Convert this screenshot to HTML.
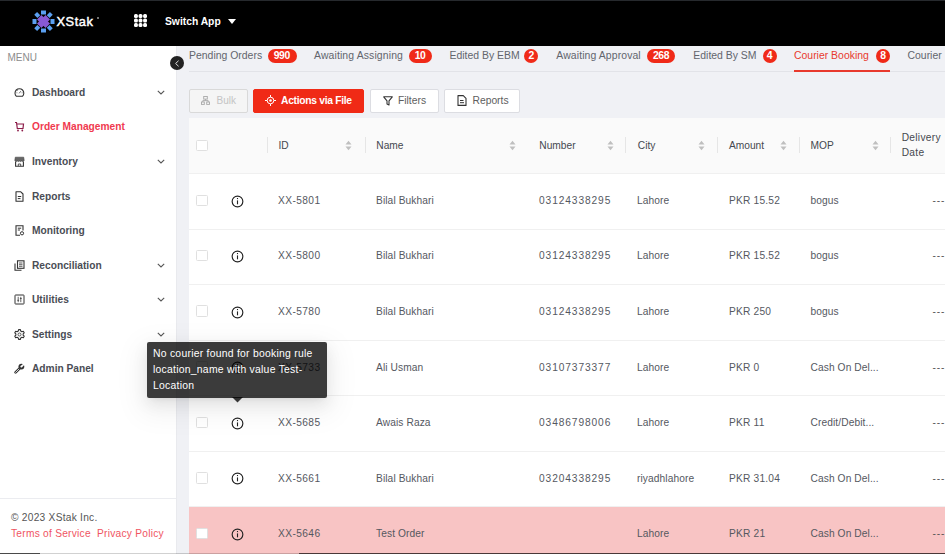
<!DOCTYPE html>
<html><head><meta charset="utf-8">
<style>
*{box-sizing:border-box;margin:0;padding:0}
html,body{width:945px;height:554px;overflow:hidden;background:#fff;font-family:"Liberation Sans",sans-serif;position:relative}
div,svg{position:absolute}
span{position:static}
#hdr{left:0;top:0;width:945px;height:46px;background:#000;border-top:1px solid #26292d}
#side{left:0;top:46px;width:176px;height:508px;background:#fff}
#main{left:176px;top:46px;width:769px;height:508px;background:#f0f1f5;border-left:1px solid #e9eaee}
.logo-t{left:56.5px;top:14px;font-size:12.8px;color:#fff;font-weight:normal;letter-spacing:0.55px;-webkit-text-stroke:0.45px #fff}
.sw{left:165px;top:16px;font-size:10.3px;color:#fff;font-weight:bold}
.menu{left:7.5px;top:51.5px;font-size:10px;color:#8c8c8c}
.mi{left:32px;font-size:10.2px;margin-top:0.9px;font-weight:bold;color:#4a4d55;white-space:nowrap}
.mi.act{color:#f03a4f}
.chev{left:157px}
.ico{left:14px}
.foot1{left:11px;top:511.5px;font-size:10.2px;color:#555;letter-spacing:0.25px}
.foot2{left:11px;top:527.5px;font-size:10.2px;letter-spacing:0.25px;color:#f05462;white-space:nowrap}
.tab{top:49.7px;font-size:10.45px;color:#62656d;white-space:nowrap}
.tab.act{color:#e8392d}
.badge{height:14px;top:48.7px;background:#f02a18;color:#fff;border-radius:7px;font-size:10.4px;line-height:13.5px;letter-spacing:-0.4px;text-indent:-0.4px;text-align:center;font-weight:bold}
.tabline{left:189px;top:71px;width:756px;height:1px;background:#e2e3e8}
.uline{left:794px;top:69.8px;width:96px;height:2px;background:#e8392d}
.btn{top:89px;height:23.6px;border:1px solid #dcdde2;border-radius:2px;background:#fff;white-space:nowrap}
.bt{font-size:10.3px;color:#5e5e5e;top:5px}
.th{left:189px;top:118px;width:756px;height:56px;background:#fafafa;border-bottom:1px solid #f0f0f0}
.ht{font-size:10.2px;color:#45484f;white-space:nowrap;top:140px}
.sep{top:137px;width:1px;height:16px;background:#e6e6e6}
.sort{top:140px}
.row{left:189px;width:756px;background:#fff;border-bottom:1px solid #f0f0f0}
.row.pink{background:#f8c4c4;border-bottom:0}
.td{font-size:10.2px;color:#55585f;white-space:nowrap}
.dash{left:932.5px;color:#555;letter-spacing:0.8px}
.cb{left:196px;width:11.5px;height:11.5px;border:1px solid #e0e0e0;background:#fff;border-radius:1.5px}
.info{left:231px}
.tip{left:147px;top:342px;width:180px;height:55.5px;background:rgba(0,0,0,0.77);border-radius:2px;color:#fff;font-size:10.4px;line-height:15.8px;padding:4px 6px;letter-spacing:0.25px;box-shadow:0 3px 6px -4px rgba(0,0,0,.12),0 6px 16px 0 rgba(0,0,0,.08),0 9px 28px 8px rgba(0,0,0,.05)}

</style></head><body>
<div id="hdr"></div>
<svg style="left:32px;top:10px" width="23" height="23" viewBox="0 0 23 23">
 <g fill="#5b9ff0">
  <rect x="9" y="0.5" width="5" height="4"/>
  <rect x="9" y="18.5" width="5" height="4"/>
  <rect x="0.5" y="9" width="4" height="5"/>
  <rect x="18.5" y="9" width="4" height="5"/>
  <rect x="3" y="3" width="4.5" height="4" transform="rotate(45 5.25 5)"/>
  <rect x="15.5" y="3" width="4.5" height="4" transform="rotate(-45 17.75 5)"/>
  <rect x="3" y="16" width="4.5" height="4" transform="rotate(-45 5.25 18)"/>
  <rect x="15.5" y="16" width="4.5" height="4" transform="rotate(45 17.75 18)"/>
 </g>
 <g stroke="#8859d4" stroke-width="6.2">
  <line x1="7.2" y1="7.2" x2="15.8" y2="15.8"/><line x1="15.8" y1="7.2" x2="7.2" y2="15.8"/>
 </g>
</svg>
<div class="logo-t">XStak</div>
<div style="left:96.5px;top:16.5px;width:2px;height:2px;border-radius:1px;background:#999"></div>
<svg style="left:134px;top:14px" width="13" height="13" viewBox="0 0 13 13"><g fill="#fff">
<rect x="0" y="0" width="3.9" height="3.9" rx="1.5"/><rect x="4.55" y="0" width="3.9" height="3.9" rx="1.5"/><rect x="9.1" y="0" width="3.9" height="3.9" rx="1.5"/>
<rect x="0" y="4.55" width="3.9" height="3.9" rx="1.5"/><rect x="4.55" y="4.55" width="3.9" height="3.9" rx="1.5"/><rect x="9.1" y="4.55" width="3.9" height="3.9" rx="1.5"/>
<rect x="0" y="9.1" width="3.9" height="3.9" rx="1.5"/><rect x="4.55" y="9.1" width="3.9" height="3.9" rx="1.5"/><rect x="9.1" y="9.1" width="3.9" height="3.9" rx="1.5"/>
</g></svg>
<div class="sw">Switch App</div>
<svg style="left:227.5px;top:19px" width="8" height="5" viewBox="0 0 8 5"><path d="M0 0H8L4 5Z" fill="#fff"/></svg>

<div id="side"></div>
<div class="menu">MENU</div>
<!-- menu items -->
<svg class="ico" style="top:87px" width="11" height="11" viewBox="0 0 11 11"><path d="M2.4 9.3A4.4 4.4 0 1 1 8.4 9.3Z" fill="none" stroke="#333" stroke-width="1.1" stroke-linejoin="round"/><path d="M5.2 6.3L6.8 4.2M2.5 5.8H3.3M3.3 3.3L3.9 3.9M7.7 5.8H8.5" stroke="#444" stroke-width="0.8"/></svg>
<div class="mi" style="top:86px">Dashboard</div>
<svg class="chev" style="top:89.5px" width="8" height="5" viewBox="0 0 8 5"><path d="M0.8 0.8L4 4L7.2 0.8" fill="none" stroke="#555" stroke-width="1.1"/></svg>

<svg class="ico" style="top:121px" width="11" height="11" viewBox="0 0 11 11"><path d="M1 1.5H2.5L3.3 7.5H9L9.5 3H2.8" fill="none" stroke="#8d1d4a" stroke-width="1.2"/><circle cx="4" cy="9.5" r="0.9" fill="#8d1d4a"/><circle cx="8.3" cy="9.5" r="0.9" fill="#8d1d4a"/></svg>
<div class="mi act" style="top:120.5px">Order Management</div>

<svg class="ico" style="top:155.5px" width="11" height="11" viewBox="0 0 11 11"><path d="M1.3 1.2H9.7L10.2 4.6Q9 6.2 7.7 4.9Q6.5 6.2 5.5 4.9Q4.5 6.2 3.3 4.9Q2 6.2 0.8 4.6Z" fill="#666" stroke="#444" stroke-width="0.6"/><path d="M1.6 5.6V10.2H9.4V5.6" fill="none" stroke="#333" stroke-width="1.1"/><path d="M4.3 10V8H6.7V10" fill="none" stroke="#444" stroke-width="0.9"/></svg>
<div class="mi" style="top:155px">Inventory</div>
<svg class="chev" style="top:158.5px" width="8" height="5" viewBox="0 0 8 5"><path d="M0.8 0.8L4 4L7.2 0.8" fill="none" stroke="#555" stroke-width="1.1"/></svg>

<svg class="ico" style="top:190.5px" width="11" height="11" viewBox="0 0 11 11"><path d="M2 0.8H6.8L9 3V10.2H2Z" fill="none" stroke="#333" stroke-width="1.1" stroke-linejoin="round"/><path d="M3.8 5.5H7.2M3.8 7.6H6.5" stroke="#333" stroke-width="1"/></svg>
<div class="mi" style="top:190px">Reports</div>

<svg class="ico" style="top:225px" width="11" height="11" viewBox="0 0 11 11"><path d="M6 10.2H2V0.8H9V5.5" fill="none" stroke="#333" stroke-width="1.1"/><path d="M3.8 3.2H7.2M3.8 5H6" stroke="#333" stroke-width="1"/><circle cx="8" cy="8.3" r="1.6" fill="none" stroke="#333" stroke-width="1"/></svg>
<div class="mi" style="top:224px">Monitoring</div>

<svg class="ico" style="top:259.5px" width="11" height="11" viewBox="0 0 11 11"><rect x="3.5" y="0.8" width="6.5" height="7.5" fill="none" stroke="#333" stroke-width="1.1"/><path d="M1 3.5V10.2H7.5" fill="none" stroke="#333" stroke-width="1.1"/><path d="M5 3H8.5M5 4.7H8.5M5 6.3H8.5" stroke="#333" stroke-width="0.8"/></svg>
<div class="mi" style="top:259px">Reconciliation</div>
<svg class="chev" style="top:262.5px" width="8" height="5" viewBox="0 0 8 5"><path d="M0.8 0.8L4 4L7.2 0.8" fill="none" stroke="#555" stroke-width="1.1"/></svg>

<svg class="ico" style="top:294px" width="11" height="11" viewBox="0 0 11 11"><rect x="1" y="1" width="9" height="9" rx="0.5" fill="none" stroke="#333" stroke-width="1"/><path d="M4.2 2.8V8.2M6.8 2.8V8.2M3.3 6.3H5.1M5.9 4.5H7.7" stroke="#333" stroke-width="0.75"/></svg>
<div class="mi" style="top:293px">Utilities</div>
<svg class="chev" style="top:296.5px" width="8" height="5" viewBox="0 0 8 5"><path d="M0.8 0.8L4 4L7.2 0.8" fill="none" stroke="#555" stroke-width="1.1"/></svg>

<svg class="ico" style="top:328.5px" width="11" height="11" viewBox="0 0 11 11"><path d="M4.61 0.58L6.39 0.58L6.75 2.02L7.89 2.67L9.32 2.27L10.20 3.81L9.14 4.84L9.14 6.16L10.20 7.19L9.32 8.73L7.89 8.33L6.75 8.98L6.39 10.42L4.61 10.42L4.25 8.98L3.11 8.33L1.68 8.73L0.80 7.19L1.86 6.16L1.86 4.84L0.80 3.81L1.68 2.27L3.11 2.67L4.25 2.02Z" fill="none" stroke="#333" stroke-width="1.1" stroke-linejoin="round"/><circle cx="5.5" cy="5.5" r="1.5" fill="none" stroke="#444" stroke-width="0.9"/></svg>
<div class="mi" style="top:328px">Settings</div>
<svg class="chev" style="top:331.5px" width="8" height="5" viewBox="0 0 8 5"><path d="M0.8 0.8L4 4L7.2 0.8" fill="none" stroke="#555" stroke-width="1.1"/></svg>

<svg class="ico" style="top:363px" width="11" height="11" viewBox="0 0 11 11"><path d="M1.6 9.4L5.6 5.4" stroke="#333" stroke-width="2.6" stroke-linecap="round"/><path d="M1.6 9.4L5.6 5.4" stroke="#fff" stroke-width="0.8" stroke-linecap="round"/><circle cx="7.4" cy="3.6" r="2.9" fill="#333"/><path d="M7.2 3.8L10.6 0.4" stroke="#fff" stroke-width="1.6"/><circle cx="7.4" cy="3.6" r="1" fill="#fff"/></svg>
<div class="mi" style="top:362px">Admin Panel</div>

<div style="left:0;top:498px;width:176px;height:1px;background:#ebecf0"></div>
<div class="foot1">© 2023 XStak Inc.</div>
<div class="foot2">Terms of Service&nbsp; Privacy Policy</div>


<div id="main"></div>
<!-- collapse button -->
<div style="left:170px;top:56px;width:14px;height:14px;border-radius:7px;background:#222"></div>
<svg style="left:174px;top:59.5px" width="6" height="7" viewBox="0 0 6 7"><path d="M4.6 0.7L1.6 3.5L4.6 6.3" fill="none" stroke="#eee" stroke-width="0.9"/></svg>

<!-- tabs -->
<div class="tab" style="left:189px">Pending Orders</div>
<div class="badge" style="left:267.5px;width:29px">990</div>
<div class="tab" style="left:314px;letter-spacing:0.12px">Awaiting Assigning</div>
<div class="badge" style="left:409px;width:22.5px">10</div>
<div class="tab" style="left:449.5px">Edited By EBM</div>
<div class="badge" style="left:524.3px;width:14px">2</div>
<div class="tab" style="left:556.3px;letter-spacing:0.1px">Awaiting Approval</div>
<div class="badge" style="left:647.4px;width:27.5px">268</div>
<div class="tab" style="left:693.3px">Edited By SM</div>
<div class="badge" style="left:762.6px;width:14px">4</div>
<div class="tab act" style="left:794px">Courier Booking</div>
<div class="badge" style="left:876.2px;width:14px">8</div>
<div class="tab" style="left:907.5px">Courier</div>
<div class="tabline"></div>
<div class="uline"></div>

<!-- buttons -->
<div class="btn" style="left:189px;width:59px;background:#f5f5f5;border-color:#d9d9d9">
 <svg style="left:11px;top:5.5px" width="9" height="9" viewBox="0 0 9 9"><g fill="none" stroke="#a8a8a8" stroke-width="0.9"><rect x="2.7" y="0.5" width="3.6" height="2.6"/><path d="M4.5 3.1V4.6M1.8 4.6H7.2M1.8 4.6V6M7.2 4.6V6"/><rect x="0.5" y="6" width="2.8" height="2.4"/><rect x="5.7" y="6" width="2.8" height="2.4"/></g></svg>
 <div class="bt" style="left:26.5px;top:4.6px;color:#c4c4c4;font-size:10px">Bulk</div>
</div>
<div class="btn" style="left:253px;width:110.5px;background:#f02a16;border-color:#f02a16">
 <svg style="left:11px;top:4.5px" width="11" height="11" viewBox="0 0 11 11"><g fill="none" stroke="#fff" stroke-width="1"><circle cx="5.5" cy="5.5" r="3.3"/><path d="M5.5 0V2.1M5.5 8.9V11M0 5.5H2.1M8.9 5.5H11"/></g><circle cx="5.5" cy="5.5" r="1.3" fill="#fff"/></svg>
 <div class="bt" style="left:27px;color:#fff;font-weight:bold;letter-spacing:-0.3px">Actions via File</div>
</div>
<div class="btn" style="left:370px;width:68.5px">
 <svg style="left:11.5px;top:5.5px" width="10" height="10" viewBox="0 0 10 10"><path d="M0.7 0.8H9.3L6 4.8V9L4 8V4.8Z" fill="none" stroke="#333" stroke-width="1.1" stroke-linejoin="round"/></svg>
 <div class="bt" style="left:27px">Filters</div>
</div>
<div class="btn" style="left:444px;width:76px">
 <svg style="left:11.5px;top:5px" width="10" height="11" viewBox="0 0 10 11"><path d="M1 0.6H6.3L9 3.3V10.4H1Z" fill="none" stroke="#333" stroke-width="1.1" stroke-linejoin="round"/><path d="M3 5.5H6.5M3 7.7H7" stroke="#333" stroke-width="1"/></svg>
 <div class="bt" style="left:27.5px">Reports</div>
</div>

<!-- table header -->
<div class="th"></div>
<div class="cb" style="top:139.5px"></div>
<div class="sep" style="left:266.5px"></div>
<div class="ht" style="left:278.4px">ID</div>
<div class="sep" style="left:364.5px"></div>
<div class="ht" style="left:376.3px">Name</div>
<div class="ht" style="left:539.3px">Number</div>
<div class="sep" style="left:625.3px"></div>
<div class="ht" style="left:637.8px">City</div>
<div class="sep" style="left:717px"></div>
<div class="ht" style="left:729px">Amount</div>
<div class="sep" style="left:798.8px"></div>
<div class="ht" style="left:810.5px">MOP</div>
<div class="sep" style="left:889.6px"></div>
<div class="ht" style="left:901.7px;top:130px;line-height:15.2px;letter-spacing:0.3px">Delivery<br>Date</div>
<svg class="sort" style="left:345.4px" width="7" height="11" viewBox="0 0 7 11"><path d="M0.5 4.5L3.5 0.8L6.5 4.5Z M0.5 6.5L3.5 10.2L6.5 6.5Z" fill="#bfbfbf"/></svg>
<svg class="sort" style="left:509.1px" width="7" height="11" viewBox="0 0 7 11"><path d="M0.5 4.5L3.5 0.8L6.5 4.5Z M0.5 6.5L3.5 10.2L6.5 6.5Z" fill="#bfbfbf"/></svg>
<svg class="sort" style="left:606.9px" width="7" height="11" viewBox="0 0 7 11"><path d="M0.5 4.5L3.5 0.8L6.5 4.5Z M0.5 6.5L3.5 10.2L6.5 6.5Z" fill="#bfbfbf"/></svg>
<svg class="sort" style="left:697.5px" width="7" height="11" viewBox="0 0 7 11"><path d="M0.5 4.5L3.5 0.8L6.5 4.5Z M0.5 6.5L3.5 10.2L6.5 6.5Z" fill="#bfbfbf"/></svg>
<svg class="sort" style="left:779.5px" width="7" height="11" viewBox="0 0 7 11"><path d="M0.5 4.5L3.5 0.8L6.5 4.5Z M0.5 6.5L3.5 10.2L6.5 6.5Z" fill="#bfbfbf"/></svg>
<svg class="sort" style="left:871.7px" width="7" height="11" viewBox="0 0 7 11"><path d="M0.5 4.5L3.5 0.8L6.5 4.5Z M0.5 6.5L3.5 10.2L6.5 6.5Z" fill="#bfbfbf"/></svg>

<div class="row" style="top:174px;height:56px"></div>
<div class="cb" style="top:194.6px"></div>
<svg class="info" style="top:194.7px" width="13" height="13" viewBox="0 0 13 13"><circle cx="6.5" cy="6.5" r="5.35" fill="none" stroke="#222" stroke-width="1.15"/><rect x="5.95" y="5.4" width="1.1" height="3.9" fill="#222"/><rect x="5.95" y="3.0" width="1.1" height="1.1" fill="#222"/></svg>
<div class="td" style="left:278px;top:195.3px;letter-spacing:0.4px">XX-5801</div>
<div class="td" style="left:376px;top:195.3px;letter-spacing:0.1px">Bilal Bukhari</div>
<div class="td" style="left:539px;top:195.3px;letter-spacing:0.9px">03124338295</div>
<div class="td" style="left:637px;top:195.3px;letter-spacing:0.1px">Lahore</div>
<div class="td" style="left:729px;top:195.3px;letter-spacing:0.2px">PKR 15.52</div>
<div class="td" style="left:810.5px;top:195.3px;letter-spacing:0.1px">bogus</div>
<div class="td dash" style="top:195.3px">---</div>
<div class="row" style="top:230px;height:55px"></div>
<div class="cb" style="top:249.8px"></div>
<svg class="info" style="top:249.8px" width="13" height="13" viewBox="0 0 13 13"><circle cx="6.5" cy="6.5" r="5.35" fill="none" stroke="#222" stroke-width="1.15"/><rect x="5.95" y="5.4" width="1.1" height="3.9" fill="#222"/><rect x="5.95" y="3.0" width="1.1" height="1.1" fill="#222"/></svg>
<div class="td" style="left:278px;top:250.4px;letter-spacing:0.4px">XX-5800</div>
<div class="td" style="left:376px;top:250.4px;letter-spacing:0.1px">Bilal Bukhari</div>
<div class="td" style="left:539px;top:250.4px;letter-spacing:0.9px">03124338295</div>
<div class="td" style="left:637px;top:250.4px;letter-spacing:0.1px">Lahore</div>
<div class="td" style="left:729px;top:250.4px;letter-spacing:0.2px">PKR 15.52</div>
<div class="td" style="left:810.5px;top:250.4px;letter-spacing:0.1px">bogus</div>
<div class="td dash" style="top:250.4px">---</div>
<div class="row" style="top:285px;height:56px"></div>
<div class="cb" style="top:305.4px"></div>
<svg class="info" style="top:305.5px" width="13" height="13" viewBox="0 0 13 13"><circle cx="6.5" cy="6.5" r="5.35" fill="none" stroke="#222" stroke-width="1.15"/><rect x="5.95" y="5.4" width="1.1" height="3.9" fill="#222"/><rect x="5.95" y="3.0" width="1.1" height="1.1" fill="#222"/></svg>
<div class="td" style="left:278px;top:306.1px;letter-spacing:0.4px">XX-5780</div>
<div class="td" style="left:376px;top:306.1px;letter-spacing:0.1px">Bilal Bukhari</div>
<div class="td" style="left:539px;top:306.1px;letter-spacing:0.9px">03124338295</div>
<div class="td" style="left:637px;top:306.1px;letter-spacing:0.1px">Lahore</div>
<div class="td" style="left:729px;top:306.1px;letter-spacing:0.2px">PKR 250</div>
<div class="td" style="left:810.5px;top:306.1px;letter-spacing:0.1px">bogus</div>
<div class="td dash" style="top:306.1px">---</div>
<div class="row" style="top:341px;height:55px"></div>
<div class="cb" style="top:361.0px"></div>
<svg class="info" style="top:361.1px" width="13" height="13" viewBox="0 0 13 13"><circle cx="6.5" cy="6.5" r="5.35" fill="none" stroke="#222" stroke-width="1.15"/><rect x="5.95" y="5.4" width="1.1" height="3.9" fill="#222"/><rect x="5.95" y="3.0" width="1.1" height="1.1" fill="#222"/></svg>
<div class="td" style="left:278px;top:361.7px;letter-spacing:0.4px">XX-5733</div>
<div class="td" style="left:376px;top:361.7px;letter-spacing:0.1px">Ali Usman</div>
<div class="td" style="left:539px;top:361.7px;letter-spacing:0.9px">03107373377</div>
<div class="td" style="left:637px;top:361.7px;letter-spacing:0.1px">Lahore</div>
<div class="td" style="left:729px;top:361.7px;letter-spacing:0.2px">PKR 0</div>
<div class="td" style="left:810.5px;top:361.7px;letter-spacing:0.1px">Cash On Del...</div>
<div class="td dash" style="top:361.7px">---</div>
<div class="row" style="top:396px;height:56px"></div>
<div class="cb" style="top:416.6px"></div>
<svg class="info" style="top:416.7px" width="13" height="13" viewBox="0 0 13 13"><circle cx="6.5" cy="6.5" r="5.35" fill="none" stroke="#222" stroke-width="1.15"/><rect x="5.95" y="5.4" width="1.1" height="3.9" fill="#222"/><rect x="5.95" y="3.0" width="1.1" height="1.1" fill="#222"/></svg>
<div class="td" style="left:278px;top:417.3px;letter-spacing:0.4px">XX-5685</div>
<div class="td" style="left:376px;top:417.3px;letter-spacing:0.1px">Awais Raza</div>
<div class="td" style="left:539px;top:417.3px;letter-spacing:0.9px">03486798006</div>
<div class="td" style="left:637px;top:417.3px;letter-spacing:0.1px">Lahore</div>
<div class="td" style="left:729px;top:417.3px;letter-spacing:0.2px">PKR 11</div>
<div class="td" style="left:810.5px;top:417.3px;letter-spacing:0.1px">Credit/Debit...</div>
<div class="td dash" style="top:417.3px">---</div>
<div class="row" style="top:452px;height:55px"></div>
<div class="cb" style="top:472.4px"></div>
<svg class="info" style="top:472.4px" width="13" height="13" viewBox="0 0 13 13"><circle cx="6.5" cy="6.5" r="5.35" fill="none" stroke="#222" stroke-width="1.15"/><rect x="5.95" y="5.4" width="1.1" height="3.9" fill="#222"/><rect x="5.95" y="3.0" width="1.1" height="1.1" fill="#222"/></svg>
<div class="td" style="left:278px;top:473.1px;letter-spacing:0.4px">XX-5661</div>
<div class="td" style="left:376px;top:473.1px;letter-spacing:0.1px">Bilal Bukhari</div>
<div class="td" style="left:539px;top:473.1px;letter-spacing:0.9px">03204338295</div>
<div class="td" style="left:637px;top:473.1px;letter-spacing:0.1px">riyadhlahore</div>
<div class="td" style="left:729px;top:473.1px;letter-spacing:0.2px">PKR 31.04</div>
<div class="td" style="left:810.5px;top:473.1px;letter-spacing:0.1px">Cash On Del...</div>
<div class="td dash" style="top:473.1px">---</div>
<div class="row pink" style="top:507px;height:47px"></div>
<div class="cb" style="top:527.6px"></div>
<svg class="info" style="top:527.7px" width="13" height="13" viewBox="0 0 13 13"><circle cx="6.5" cy="6.5" r="5.35" fill="none" stroke="#222" stroke-width="1.15"/><rect x="5.95" y="5.4" width="1.1" height="3.9" fill="#222"/><rect x="5.95" y="3.0" width="1.1" height="1.1" fill="#222"/></svg>
<div class="td" style="left:278px;top:528.3px;letter-spacing:0.4px">XX-5646</div>
<div class="td" style="left:376px;top:528.3px;letter-spacing:0.1px">Test Order</div>
<div class="td" style="left:637px;top:528.3px;letter-spacing:0.1px">Lahore</div>
<div class="td" style="left:729px;top:528.3px;letter-spacing:0.2px">PKR 21</div>
<div class="td" style="left:810.5px;top:528.3px;letter-spacing:0.1px">Cash On Del...</div>
<div class="td dash" style="top:528.3px">---</div>

<div style="left:0;top:553px;width:40px;height:1px;background:#4a4a4a"></div>
<div style="left:40px;top:553px;width:259px;height:1px;background:rgba(0,0,0,0.18)"></div>
<div style="left:299px;top:553px;width:646px;height:1px;background:rgba(30,20,20,0.8)"></div>
<!-- tooltip -->
<div class="tip">No courier found for booking rule location_name with value Test-Location</div>
<svg style="left:231.5px;top:397px" width="11" height="6" viewBox="0 0 11 6"><path d="M0 0H11L5.5 5.5Z" fill="rgba(0,0,0,0.77)"/></svg>
<div style="left:0;top:0;width:0;height:0"></div>

</body></html>
